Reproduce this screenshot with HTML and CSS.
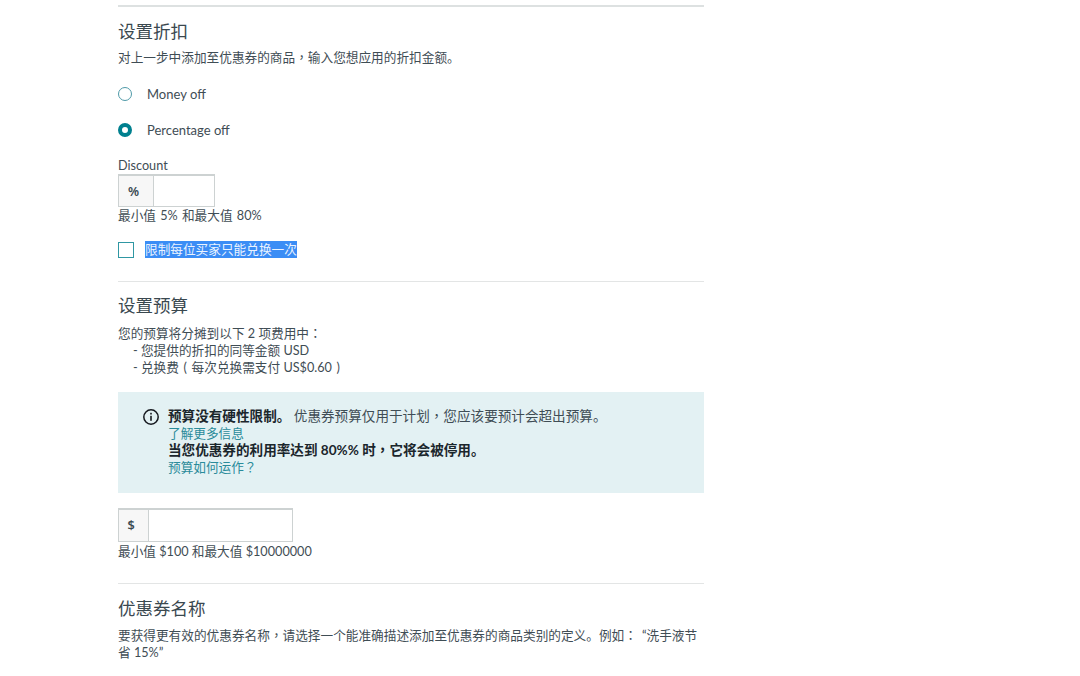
FILE: index.html
```html
<!DOCTYPE html>
<html lang="zh-CN">
<head>
<meta charset="utf-8">
<title>设置折扣</title>
<link rel="stylesheet" href="styles.css">
</head>
<body>
<main class="form">
  <section class="sec sec-discount">
    <h2 class="title">设置折扣</h2>
    <p class="txt">对上一步中添加至优惠券的商品<span class="cp" lang="zh-TW">，</span>输入您想应用的折扣金额。</p>
    <label class="radio-row first"><span class="radio"></span><span>Money off</span></label>
    <label class="radio-row"><span class="radio on"></span><span>Percentage off</span></label>
    <div class="field-label">Discount</div>
    <div class="input-group short"><span class="addon pct">%</span><span class="input"></span></div>
    <p class="txt hint-wide">最小值 5% 和最大值 80%</p>
    <label class="check-row"><span class="check"></span><span class="selected">限制每位买家只能兑换一次</span></label>
  </section>
  <section class="sec sec-budget">
    <h2 class="title">设置预算</h2>
    <p class="txt">您的预算将分摊到以下 2 项费用中<span class="cp" lang="zh-TW">：</span></p>
    <p class="txt indent">- 您提供的折扣的同等金额 USD</p>
    <p class="txt indent">- 兑换费<span class="paren">(</span>每次兑换需支付 US$0.60<span class="paren">)</span></p>
    <div class="alert">
      <svg class="alert-icon" width="18" height="18" viewBox="0 0 18 18" aria-hidden="true">
        <circle cx="9" cy="9" r="7.2" fill="none" stroke="#16191f" stroke-width="1.5"/>
        <rect x="8.2" y="7.8" width="1.6" height="5" fill="#16191f"/>
        <rect x="8.2" y="4.8" width="1.6" height="1.7" fill="#16191f"/>
      </svg>
      <div class="alert-body">
        <div class="alert-line"><strong>预算没有硬性限制。</strong> 优惠券预算仅用于计划<span class="cp" lang="zh-TW">，</span>您应该要预计会超出预算。</div>
        <a class="link">了解更多信息</a>
        <div class="alert-line"><strong>当您优惠券的利用率达到 80%% 时<span class="cp" lang="zh-TW">，</span>它将会被停用。</strong></div>
        <a class="link">预算如何运作<span class="cp" lang="zh-TW">？</span></a>
      </div>
    </div>
    <div class="input-group long"><span class="addon dollar">$</span><span class="input"></span></div>
    <p class="txt">最小值 $100 和最大值 $10000000</p>
  </section>
  <section class="sec sec-name">
    <h2 class="title">优惠券名称</h2>
    <p class="txt">要获得更有效的优惠券名称<span class="cp" lang="zh-TW">，</span>请选择一个能准确描述添加至优惠券的商品类别的定义。例如<span class="cp" lang="zh-TW">：</span><span class="quote">“</span>洗手液节省 15%”</p>
  </section>
</main>
</body>
</html>
```
FILE: styles.css
```css
* { box-sizing: border-box; }
html, body { margin: 0; padding: 0; background: #fff; height: 676px; overflow: hidden; }
body {
  font-family: "Lato", "Noto Sans CJK SC", sans-serif;
  font-size: 12.67px;
  line-height: 17px;
  color: #3f4d55;
  text-spacing-trim: space-all;
}
.cp { font-family: "Noto Sans CJK TC", sans-serif; line-height: 1; }
.paren { display: inline-block; width: 1em; text-align: center; line-height: 1; }
.quote { padding-left: 5px; }
.form { width: 586px; margin-left: 118px; padding-top: 5px; }
.sec { border-top: 1px solid #e3e5e5; }
.sec-discount { border-top: 2px solid #dde1e1; padding-top: 13px; height: 276px; }
.sec-budget { padding-top: 12px; height: 302px; }
.sec-name { padding-top: 13px; }
.title { margin: 0 0 7px; font-size: 17.5px; line-height: 24px; font-weight: 400; color: #3a484f; }
.sec-discount .title { margin-bottom: 5px; }
.sec-name .title { margin-bottom: 6px; }
.txt { margin: 0; }
.hint-wide { margin: 0; word-spacing: 1px; }
.indent { padding-left: 15px; }
.radio-row { display: flex; align-items: center; gap: 15px; height: 18px; margin-bottom: 18px; font-size: 13px; }
.radio-row.first { margin-top: 19px; }
.radio { width: 14px; height: 14px; border-radius: 50%; border: 1px solid #4f9aa8; background: #fff; }
.radio.on { border: 4px solid #00808f; }
.field-label { margin-top: 18px; }
.input-group { display: flex; height: 33px; border: 1px solid #cdd2d2; border-top-width: 2px; }
.input-group.short { width: 97px; }
.input-group.long { width: 175px; height: 34px; margin-top: 15px; margin-bottom: 1px; }
.addon { display: flex; align-items: center; justify-content: center; background: #f7f7f7; border-right: 1px solid #cdd2d2; padding-right: 5px; font-family: "Noto Sans", sans-serif; font-weight: 600; color: #3a4a52; }
.addon.pct { width: 35px; }
.addon.dollar { width: 30px; }
.input { flex: 1; background: #fff; }
.check-row { display: flex; align-items: center; gap: 11px; margin-top: 16px; height: 18px; }
.check { width: 16px; height: 16px; margin-top: 2px; border: 1px solid #2f97a3; background: #fff; }
.selected { background: #3b8df5; color: #eaf3ff; }
.alert { display: flex; gap: 8px; background: #e3f1f3; height: 101px; margin-top: 16px; padding: 16px 24px; }
.alert-icon { flex: none; }
.alert-line { font-size: 13.6px; height: 17px; }
.alert strong { font-weight: 700; color: #1b262c; }
.link { display: block; color: #2a8b9a; height: 17px; }
```
